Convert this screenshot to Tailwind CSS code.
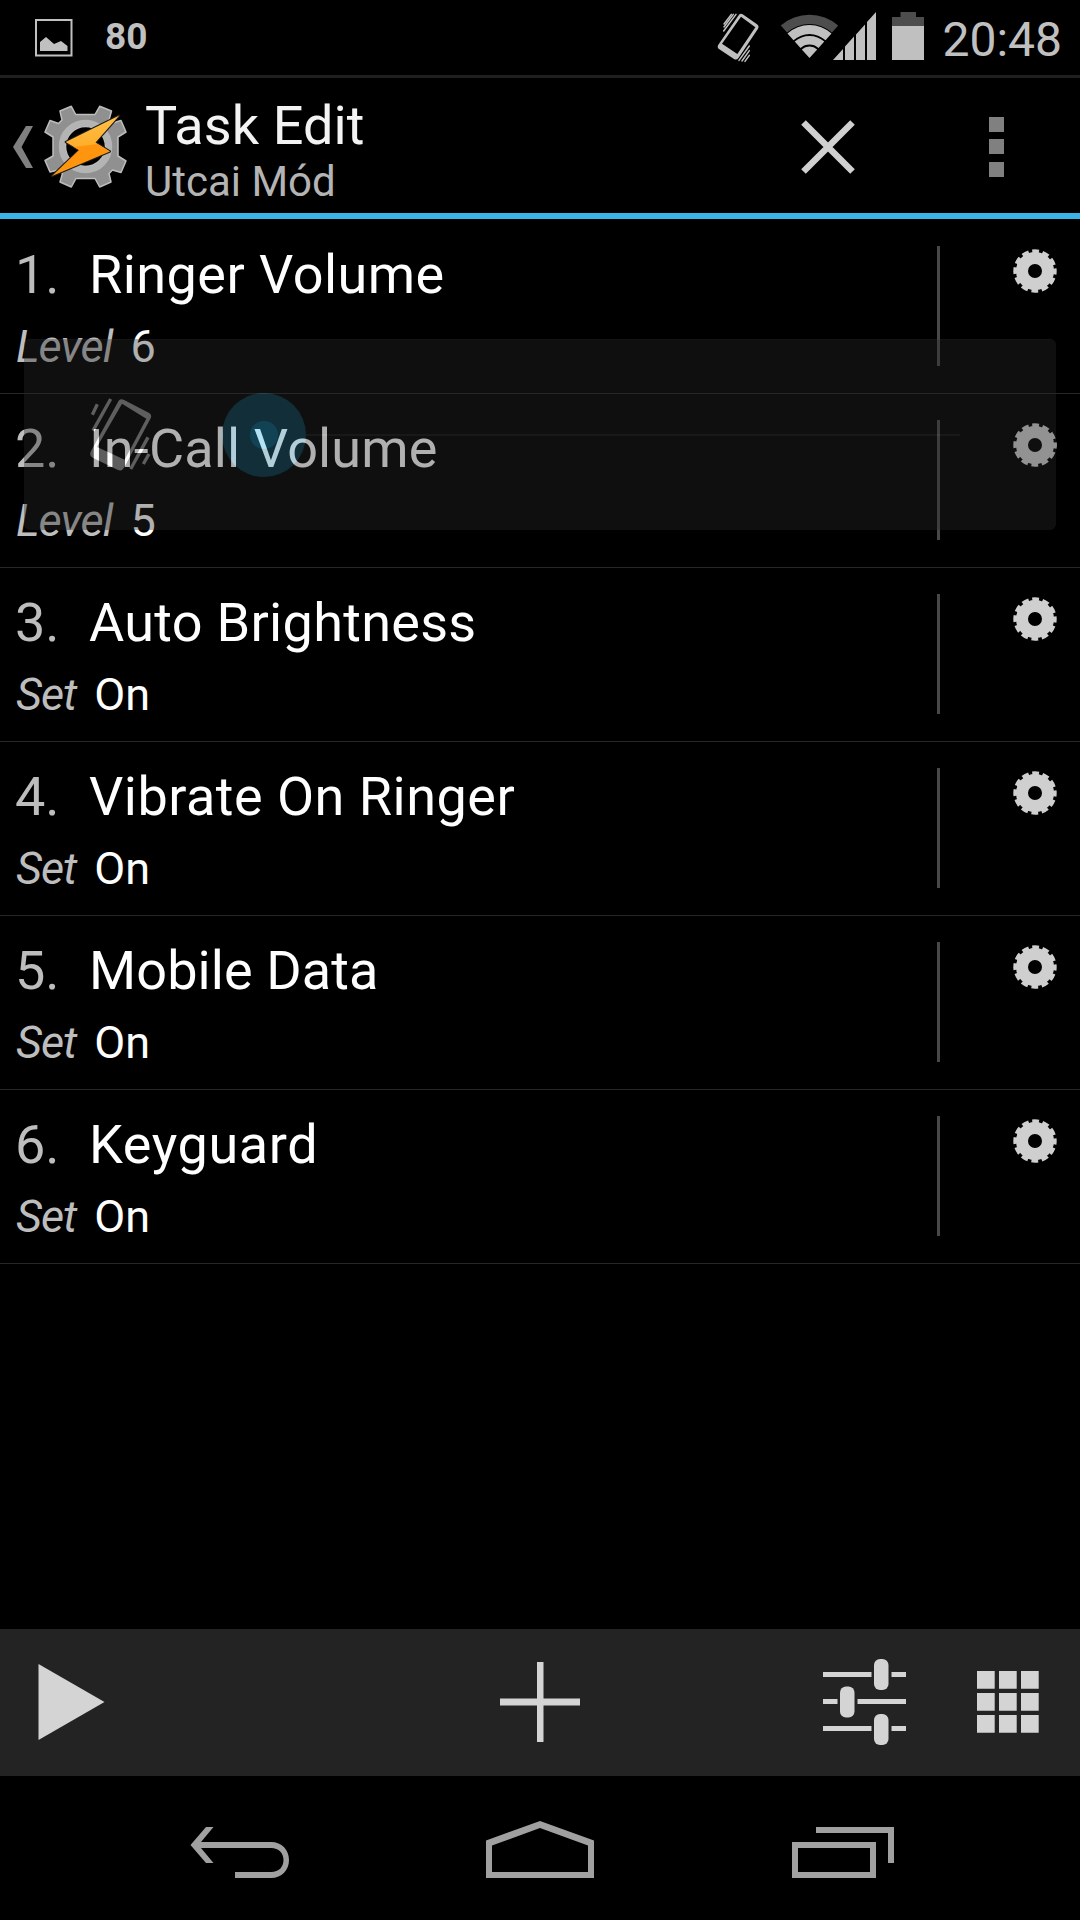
<!DOCTYPE html>
<html lang="en">
<head>
    <meta charset="UTF-8">
    <meta name="viewport" content="width=device-width, initial-scale=1.0">
    <title>Task Edit</title>
    <script src="https://cdn.jsdelivr.net/npm/@tailwindcss/browser@4"></script>
</head>
<body class="bg-black font-[Roboto,sans-serif] text-white">

    <!-- shared icons -->
    <svg class="hidden">
        <symbol id="gear" viewBox="-22 -22 44 44">
            <circle r="13" fill="none" stroke="#cfcfcf" stroke-width="12"/>
            <circle r="19.700" fill="none" stroke="#cfcfcf" stroke-width="4" stroke-dasharray="6.800 3.515" stroke-dashoffset="3.400"/>
        </symbol>
    </svg>

    <div class="relative flex h-[1920px] w-[1080px] flex-col overflow-hidden">

        <!-- status bar -->
        <div class="flex h-[78px] shrink-0 items-start border-b-[3px] border-[#1f1f1f] pl-[35px] pr-[18px] text-[#c0c0c0]">
            <svg class="mt-[19px] h-[38px] w-[38px]" viewBox="0 0 38 38">
                <rect x="1" y="1" width="35.500" height="35.500" fill="none" stroke="currentColor" stroke-width="2"/>
                <path fill="currentColor" d="M5 31V23L11 18 19 25 26 22 32.500 27V32H5z"/>
            </svg>
            <span class="ml-[32px] mt-[15px] text-[37px] leading-[44px] font-bold">80</span>
            <svg class="ml-auto mt-[5px] h-[62px] w-[56px]" viewBox="0 0 168 186">
                <path fill="currentColor" fill-rule="evenodd" d="M86 31Q91 24 98 28L140 57Q149 63 144 71L86 158Q80 167 72 162L28 133Q20 127 25 119zM93 35L36 116 82 147 136 67z"/>
                <path fill="none" stroke="currentColor" stroke-width="4.500" stroke-linecap="round" d="M64 28L42 57M78 28L41 78M70 28L42 66M118 123L87 166M118 137L96 168M118 151L105 169"/>
            </svg>
            <svg class="ml-[14px] mt-[14px] h-[46px] w-[60px]" viewBox="0 0 60 46">
                <path fill="#4d4d4d" d="M.8 11.500A43.500 43.500 0 0 1 58.200 11.500L52 18.500A34 34 0 0 0 7 18.500z"/>
                <path fill="currentColor" d="M7.500 19.500A33 33 0 0 1 51.500 19.500L45.500 26.200A24 24 0 0 0 13.500 26.200zM14.700 27.500A22.300 22.300 0 0 1 44.300 27.500L38.500 34A13.500 13.500 0 0 0 20.500 34zM21.800 35.400A11.500 11.500 0 0 1 37.200 35.400L29.500 44z"/>
            </svg>
            <svg class="-ml-[7px] mt-[12px] h-[48px] w-[43px]" viewBox="0 0 43 48">
                <path fill="currentColor" d="M0 48L10 37V48zM12 48V34.500L21 24.500V48zM23 48V22.500L32 12.500V48zM34 48V10L43 0V48z"/>
            </svg>
            <svg class="ml-[16px] mt-[12px] h-[48px] w-[32px]" viewBox="0 0 32 48">
                <path fill="#4d4d4d" d="M8.500 0H24V5H32V14H0V5H8.500z"/>
                <path fill="currentColor" d="M0 14H32V48H0z"/>
            </svg>
            <span class="ml-[18px] mt-[12px] text-[48px] leading-[56px]">20:48</span>
        </div>

        <!-- action bar -->
        <header class="flex h-[141px] shrink-0 items-start border-b-[6px] border-[#3bb3e4] pl-[13px]">
            <svg class="mt-[48px] h-[42px] w-[20px]" viewBox="0 0 20 42">
                <path fill="#808080" d="M13 0H20L8.500 21 20 42H13L0 21z"/>
            </svg>
            <svg class="ml-[11px] mt-[27px] h-[84px] w-[84px]" viewBox="0 0 84 84">
                <defs>
                    <linearGradient id="boltTop" x1="0" y1="0" x2="0" y2="1">
                        <stop offset="0" stop-color="#ffc04a"/>
                        <stop offset="1" stop-color="#ffab25"/>
                    </linearGradient>
                </defs>
                <g transform="translate(41.500 41.500)">
                    <path fill="#909090" fill-rule="evenodd" stroke="#bdbdbd" stroke-width="1.500" stroke-linejoin="round" d="M-9.800 -32L-14.200 -40.200 -25.500 -35.500 -23.500 -26.500 -27 -23 -35.500 -26 -40.500 -14.500 -32.500 -9.500V9.500L-40.500 14 -35.500 25.500 -27 23.500 -23 27 -25.500 35.500 -14.200 40.500 -9.500 32H9.500L14.200 40.500 25.500 35.500 23.500 27 27 23.500 35.500 26 40.500 14.500 32.500 9.500V-9.500L40.500 -14.500 35.500 -26 27 -23.500 23.500 -26.500 26 -35.500 14.200 -40.200 9.500 -32zM-20 0A20 20 0 1 0 20 0A20 20 0 1 0 -20 0z"/>
                    <circle r="23.500" fill="none" stroke="#b4b4b4" stroke-width="6.500"/>
                    <path fill="#1c1c1c" stroke="#1c1c1c" stroke-width="2.200" stroke-linejoin="round" d="M33.800 -31L-19.800 -4.500 -6.500 3.500 -33.500 29.500 24.500 5 10 -4z"/>
                    <path fill="url(#boltTop)" d="M33.800 -31L-19.800 -4.500 -6.500 3.500 24.500 5 10 -4z"/>
                    <path fill="#ff950f" d="M-11.500 .5L-6.500 3.500 -33.500 29.500 24.500 5 12 -2.500z"/>
                </g>
            </svg>
            <div class="ml-[17px] mt-[16px] flex flex-col">
                <span class="text-[54px] leading-[63px] tracking-[0.1px] text-[#f3f3f3]">Task Edit</span>
                <span class="mt-[1px] text-[42px] leading-[48px] text-[#b4b4b4]">Utcai Mód</span>
            </div>
            <svg class="ml-auto mt-[41px] h-[56px] w-[56px]" viewBox="-28 -28 56 56">
                <path stroke="#d0d0d0" stroke-width="6.500" d="M-24.500 -24.500L24.500 24.500M-24.500 24.500L24.500 -24.500"/>
            </svg>
            <svg class="ml-[133px] mr-[76px] mt-[39px] h-[60px] w-[15px]" viewBox="0 0 15 60">
                <path fill="#808080" d="M0 0H15V15H0zM0 22H15V37H0zM0 45H15V60H0z"/>
            </svg>
        </header>

        <!-- action list, rows come from the template -->
        <main id="taskList" class="flex grow flex-col pt-px"></main>

        <template id="rowTemplate">
            <div class="flex h-[174px] shrink-0 items-start border-b border-[#262626] pl-[15px]">
                <div class="flex flex-col pt-[23px]">
                    <div class="flex text-[54px] leading-[64px]">
                        <span class="num w-[74px] text-[#bdbdbd]"></span>
                        <span class="name whitespace-nowrap"></span>
                    </div>
                    <div class="mt-[13px] flex pl-px text-[45px] leading-[54px]">
                        <span class="key italic text-[#bdbdbd]"></span>
                        <span class="val ml-[18px]"></span>
                    </div>
                </div>
                <div class="ml-auto mt-[26px] h-[120px] w-[3px] bg-[#484848]"></div>
                <svg class="ml-[73px] mr-[23px] mt-[29px] h-[44px] w-[44px]"><use href="#gear"/></svg>
            </div>
        </template>

        <!-- bottom toolbar -->
        <div class="flex h-[147px] shrink-0 items-center bg-[#232323] pb-[1px] pl-[38px] pr-[41px]">
            <svg class="h-[76px] w-[67px]" viewBox="0 0 67 76"><path fill="#d4d4d4" d="M.5 0L66.500 38 .5 76z"/></svg>
            <svg class="ml-[395px] h-[80px] w-[80px]" viewBox="0 0 80 80"><path fill="#d4d4d4" d="M37 0H43.500V36.500H80V43.500H43.500V80H37V43.500H0V36.500H37z"/></svg>
            <svg class="ml-auto h-[86px] w-[83px]" viewBox="0 0 83 86" fill="#d4d4d4">
                <path d="M0 13H48.500V18H0zM68.500 13H83V18H68.500zM0 40H14.500V45H0zM34.500 40H83V45H34.500zM0 67H48.500V72H0zM68.500 67H83V72H68.500z"/>
                <rect x="51" y="0" width="14.500" height="31" rx="6"/>
                <rect x="17" y="27.500" width="14.500" height="31" rx="6"/>
                <rect x="51" y="55" width="14.500" height="31" rx="6"/>
            </svg>
            <svg class="ml-[71px] h-[62px] w-[62px]" viewBox="0 0 62 62">
                <path fill="#d4d4d4" d="M0 0h17.700v17.700h-17.700zM22 0h17.700v17.700h-17.700zM44 0h17.700v17.700h-17.700zM0 22h17.700v17.700h-17.700zM22 22h17.700v17.700h-17.700zM44 22h17.700v17.700h-17.700zM0 44h17.700v17.700h-17.700zM22 44h17.700v17.700h-17.700zM44 44h17.700v17.700h-17.700z"/>
            </svg>
        </div>

        <!-- navigation bar -->
        <nav class="flex h-[144px] shrink-0 items-start pl-[190px] pr-[186px] pt-[45px]">
            <svg class="mt-px h-[57px] w-[100px]" viewBox="0 0 100 57">
                <path fill="#a0a0a0" d="M16 5H23.500L11 20H81C92 20 99 28 99 38S92 56 81 56H45V50H81C89 50 93.500 45 93.500 38S89 26 81 26H11L23.500 41H16L.5 23z"/>
            </svg>
            <svg class="ml-[196px] h-[57px] w-[108px]" viewBox="0 0 108 57">
                <path fill="#a0a0a0" fill-rule="evenodd" d="M54 0L108 19.500V57H0V19.500zM54 7L6 24.500V51H102V24.500z"/>
            </svg>
            <svg class="ml-auto h-[57px] w-[102px]" viewBox="0 0 102 57">
                <path fill="#a0a0a0" fill-rule="evenodd" d="M0 21H84V57H0zM6 27V51H78V27zM24 6H102V42H96V12H24z"/>
            </svg>
        </nav>

        <!-- volume popup, fading out over the list -->
        <div class="absolute left-[24px] top-[339px] flex h-[191px] w-[1032px] items-center rounded-[6px] border-t border-[#3a3a3a] bg-[#2b2b2b] opacity-[.37]">
            <svg class="ml-[58px] mt-[10px] h-[100px] w-[80px] shrink-0" viewBox="0 0 240 300">
                <path fill="#fff" fill-rule="evenodd" d="M110 32Q116 25 125 29L200 68Q211 74 206 85L127 232Q120 245 108 240L32 203Q21 196 26 185zM120 41L45 171 128 209 193 86z"/>
                <path fill="none" stroke="#fff" stroke-width="10" d="M46 43L31 74M86 27L33 122M198 142L146 237M201 192L184 222"/>
            </svg>
            <svg class="ml-[59px] h-[86px] w-[740px] shrink-0" viewBox="0 0 740 86">
                <path fill="#454545" d="M85 42H739V44H85z"/>
                <circle cx="43" cy="43" r="42" fill="#307e9b"/>
                <circle cx="43" cy="43" r="14" fill="#33b5e5"/>
            </svg>
        </div>
    </div>

    <script>
        const tasks = [
            { name: 'Ringer Volume', key: 'Level', val: '6', tracking: 'tracking-[0.45px]' },
            { name: 'In-Call Volume', key: 'Level', val: '5', tracking: 'tracking-[0.15px]' },
            { name: 'Auto Brightness', key: 'Set', val: 'On', tracking: 'tracking-[0.3px]' },
            { name: 'Vibrate On Ringer', key: 'Set', val: 'On', tracking: 'tracking-[0.48px]' },
            { name: 'Mobile Data', key: 'Set', val: 'On', tracking: 'tracking-[0.1px]' },
            { name: 'Keyguard', key: 'Set', val: 'On', tracking: 'tracking-[0.6px]' },
        ];
        const list = document.getElementById('taskList');
        const template = document.getElementById('rowTemplate');

        tasks.forEach((task, i) => {
            const row = template.content.cloneNode(true);
            row.querySelector('.num').textContent = (i + 1) + '.';
            row.querySelector('.name').textContent = task.name;
            row.querySelector('.name').classList.add(task.tracking);
            row.querySelector('.key').textContent = task.key;
            row.querySelector('.key').classList.add(task.key === 'Level' ? 'tracking-[-0.9px]' : 'tracking-[-1px]');
            row.querySelector('.val').textContent = task.val;
            list.appendChild(row);
        });
    </script>
</body>
</html>
